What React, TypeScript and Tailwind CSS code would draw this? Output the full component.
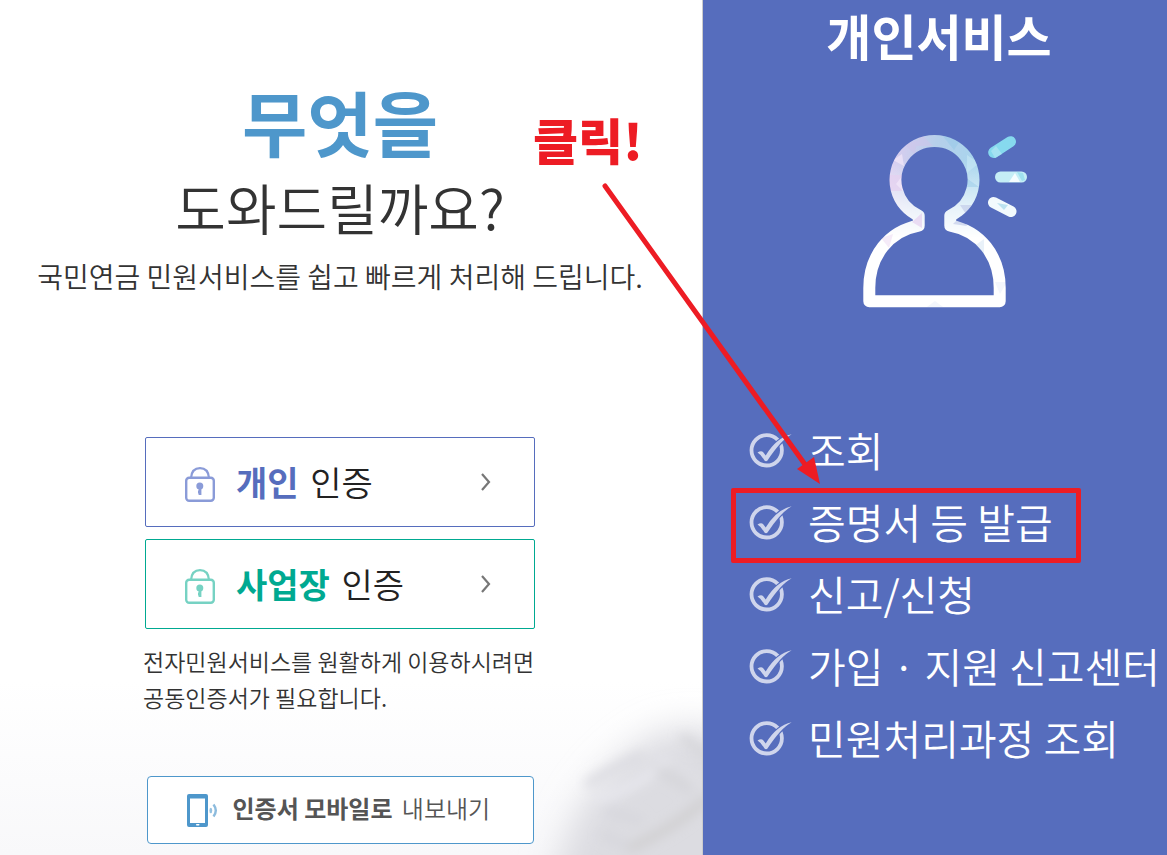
const services = [
  { label: "조회" },
  { label: "증명서 등 발급", marked: true },
  { label: "신고/신청" },
  { label: "가입 · 지원 신고센터" },
  { label: "민원처리과정 조회" },
];

const LockIcon = ({ className }: { className: string }) => (
  <svg
    className={className}
    width="30"
    height="35"
    viewBox="0 0 30 35"
    fill="none"
    stroke="currentColor"
    aria-hidden="true"
  >
    <path d="M6 11C6.500 4.500 10 1.200 15 1.200S23.500 4.500 24 11" strokeWidth="2.200" />
    <rect x="1.200" y="10.800" width="27.600" height="23" rx="3" strokeWidth="2.400" />
    <circle cx="14.800" cy="19" r="3.500" fill="currentColor" stroke="none" />
    <path d="M15 20v8M13 25h1.500" strokeWidth="2.800" />
  </svg>
);

const ChevronIcon = () => (
  <svg
    className="ml-auto text-[#777777]"
    width="12"
    height="18"
    viewBox="0 0 12 18"
    fill="none"
    stroke="currentColor"
    strokeWidth="2.200"
    aria-hidden="true"
  >
    <path d="M2 1l7 8-7 8" />
  </svg>
);

const PhoneIcon = () => (
  <svg
    className="shrink-0 text-[#4e97cb]"
    width="31"
    height="33"
    viewBox="0 0 31 33"
    aria-hidden="true"
  >
    <path
      fill="currentColor"
      fillRule="evenodd"
      d="M2 0h17a2 2 0 0 1 2 2v29a2 2 0 0 1-2 2H2a2 2 0 0 1-2-2V2a2 2 0 0 1 2-2zM3 4.500v24.500h15V4.500z"
    />
    <rect x="9" y="30" width="3.500" height="1.500" rx=".7" fill="#fff" />
    <ellipse cx="23.800" cy="16.500" rx="1.400" ry="2.800" fill="currentColor" opacity=".6" />
    <path
      d="M26.500 10.500q4.600 6 0 12"
      fill="none"
      stroke="currentColor"
      strokeWidth="2.400"
      opacity=".65"
    />
  </svg>
);

const CheckIcon = () => (
  <svg className="shrink-0" width="43" height="36" viewBox="0 0 43 36" aria-hidden="true">
    <circle cx="17.700" cy="18.300" r="15.200" fill="none" stroke="#cfd5ec" strokeWidth="3.800" />
    <path
      d="M8.500 20.500Q12 18.500 14 20L16.700 23.500Q27.500 5.500 42.700 2.300 32 8 18.500 28.500 17 30 15.500 28.500 12 22.500 8.500 20.500z"
      fill="#cfd5ec"
      stroke="#566dbd"
      strokeWidth="2.400"
      paintOrder="stroke"
    />
  </svg>
);

const PersonIcon = () => (
  <svg
    className="mx-auto"
    width="192"
    height="184"
    viewBox="0 0 192 184"
    fill="none"
    aria-hidden="true"
  >
    <defs>
      <linearGradient id="head" x1="50" y1="30" x2="142" y2="50" gradientUnits="userSpaceOnUse">
        <stop offset="0" stopColor="#dccdf0" />
        <stop offset=".45" stopColor="#b6cfea" />
        <stop offset="1" stopColor="#a5d6ee" />
      </linearGradient>
      <linearGradient id="fade" x1="0" y1="30" x2="0" y2="108" gradientUnits="userSpaceOnUse">
        <stop offset="0" stopColor="#fff" stopOpacity="0" />
        <stop offset=".65" stopColor="#fff" stopOpacity=".75" />
        <stop offset="1" stopColor="#fff" />
      </linearGradient>
      <mask id="person" maskUnits="userSpaceOnUse" x="0" y="0" width="192" height="184">
        <path
          d="M79.700 95.600V85.700A39 39 0 1 1 111.300 85.700V95.600C141 101 160.700 126 160.700 158V171.300H30.300V158C30.300 126 50 101 79.700 95.600V85.700"
          stroke="#fff"
          strokeWidth="12"
          strokeLinejoin="round"
        />
      </mask>
    </defs>
    <g mask="url(#person)">
      <rect width="192" height="184" fill="url(#head)" />
      <rect width="192" height="184" fill="url(#fade)" />
      <path d="M50 45h13v16H50zM73 92l10-9v15z" fill="#e6d0f0" opacity=".7" />
      <path d="M57 54l7-9v16zM54 30l9-6 2 12z" fill="#f3e8fa" opacity=".7" />
      <path d="M82 4l12 12H76zM66 15l12-5-2 14z" fill="#cfc3ea" opacity=".5" />
      <path d="M103 5l12 15 8-12zM126 47l14 10h-14z" fill="#8fc6e6" opacity=".4" />
      <path d="M128 25l12 8-12 10z" fill="#c9e9f5" opacity=".6" />
      <path d="M121 75h12l-6 9zM114 94l8-8 6 10z" fill="#c3cdea" opacity=".7" />
      <path d="M42 108l12-4-4 14z" fill="#f3e6f6" opacity=".8" />
      <path d="M134 117l11-8v18z" fill="#e3eef8" opacity=".8" />
      <path d="M156 152h12l-7 12zM88 177l8-6 8 6z" fill="#f3f6fc" />
    </g>
    <g strokeWidth="11" strokeLinecap="round">
      <path d="M154.700 22.500L171.500 11.700" stroke="#86d9ee" />
      <path d="M161.500 47H182.500" stroke="#c5eef6" />
      <path d="M154.500 72.500L172 81.500" stroke="#f2fafd" />
    </g>
    <path d="M152 21l5-5 6 8-7 4z" fill="#b9e8f5" opacity=".6" />
    <path d="M170 52l6-9 5 9z" fill="#f5fdff" />
    <path d="M178 42l6 1 2 7-3 1z" fill="#9fe2ef" />
    <path d="M158 73l11 2-4 5z" fill="#bce3f0" />
  </svg>
);

// soft grey shape fading into the lower right corner of the white panel
const Backdrop = () => (
  <svg
    className="pointer-events-none absolute right-0 bottom-0"
    width="703"
    height="175"
    viewBox="0 0 703 175"
    aria-hidden="true"
  >
    <defs>
      <filter id="wide" x="-30%" y="-30%" width="160%" height="160%">
        <feGaussianBlur stdDeviation="17" />
      </filter>
      <filter id="thin" x="-30%" y="-30%" width="160%" height="160%">
        <feGaussianBlur stdDeviation="6" />
      </filter>
      <linearGradient id="floor" x1="0" y1="0" x2="0" y2="1">
        <stop offset="0" stopColor="#fff" />
        <stop offset="1" stopColor="#f8f8fa" />
      </linearGradient>
    </defs>
    <rect width="703" height="175" fill="url(#floor)" />
    <path
      d="M550 230C560 150 590 100 640 65C675 38 720 45 760 70V230H550z"
      fill="#dcdce1"
      filter="url(#wide)"
    />
    <g fill="none" strokeLinecap="round" filter="url(#thin)">
      <path d="M590 103Q620 85 642 76" stroke="#dadae0" strokeWidth="9" />
      <path d="M610 132L640 140M605 155L625 165" stroke="#d6d6dc" strokeWidth="8" />
      <path d="M600 118Q640 108 665 82" stroke="#e8e8ee" strokeWidth="9" />
      <path d="M632 168Q680 145 706 120" stroke="#cfcecf" strokeWidth="8" />
      <path d="M660 90L690 108M685 58L706 75" stroke="#d4d4d8" strokeWidth="8" />
      <path d="M670 75L703 105" stroke="#e0e0e5" strokeWidth="7" />
    </g>
  </svg>
);

const AuthButton = ({
  name,
  box,
  text,
  icon,
}: {
  name: string;
  box: string;
  text: string;
  icon: string;
}) => (
  <button
    type="button"
    className={`flex h-[90px] w-full cursor-pointer items-center rounded-xs border bg-white pr-[42px] pl-[39px] ${box}`}
  >
    <LockIcon className={`mt-1 shrink-0 ${icon}`} />
    <span className="ml-[21px] text-[34px] leading-[48px] font-[350] whitespace-pre text-[#222222]">
      <strong className={`mr-1 font-bold ${text}`}>{name}</strong> 인증
    </span>
    <ChevronIcon />
  </button>
);

const Intro = () => (
  <section className="relative flex flex-col items-center border-r border-[#cccccc] bg-white pt-20 pr-[22px] pb-[11px]">
    <Backdrop />
    <h1 className="relative text-center font-[350] text-[#333333]">
      <strong className="block text-[71px] leading-[80px] font-bold text-[#4e97cb]">
        무엇을
      </strong>
      <span className="mt-1.5 block text-[55px] leading-[80px]">도와드릴까요?</span>
    </h1>
    <p className="relative mt-2.5 text-[28px] leading-10 font-[350] whitespace-nowrap text-[#333333]">
      국민연금 민원서비스를 쉽고 빠르게 처리해 드립니다.
    </p>
    <div className="relative mt-[141px] flex w-[390px] flex-col gap-3">
      <AuthButton
        name="개인"
        box="border-[#566dbd]"
        text="text-[#566dbd]"
        icon="text-[#8a9bd8]"
      />
      <AuthButton
        name="사업장"
        box="border-[#00a991]"
        text="text-[#00a991]"
        icon="text-[#76d2c3]"
      />
    </div>
    <p className="relative mt-3.5 w-[394px] text-[23px] leading-9 font-[350] whitespace-nowrap text-[#333333]">
      전자민원서비스를 원활하게 이용하시려면
      <br />
      공동인증서가 필요합니다.
    </p>
    <button
      type="button"
      className="relative mt-[61px] flex h-[68px] w-[387px] cursor-pointer items-center rounded-sm border border-[#4e97cb] bg-white pl-[39px] text-[24px] font-[350] whitespace-nowrap text-[#555555]"
    >
      <PhoneIcon />
      <span className="ml-[15px] pb-1">
        <strong className="mr-1 font-bold">인증서 모바일로</strong> 내보내기
      </span>
    </button>
  </section>
);

const PersonalService = () => (
  <section className="bg-[#566dbd] text-white">
    <h2 className="pl-2 text-center text-[49px] leading-[70px] font-bold">개인서비스</h2>
    <div className="mt-[60px]">
      <PersonIcon />
    </div>
    <ul className="mt-[100px] pl-[46px]">
      {services.map((service) => (
        <li key={service.label} className="relative h-18">
          <a
            href="#"
            className="flex h-full items-center gap-4 text-[41px] font-[350] whitespace-nowrap"
          >
            <CheckIcon />
            {service.label}
          </a>
          {service.marked && (
            <span className="pointer-events-none absolute top-0.5 -left-[18px] h-[75px] w-[350px] rounded-xs border-[5px] border-[#ed1c24]" />
          )}
        </li>
      ))}
    </ul>
  </section>
);

const ClickNote = () => (
  <div className="pointer-events-none absolute top-[108px] left-[533px] text-[#ed1c24]">
    <p className="text-[49px] leading-[62px] font-black">클릭!</p>
    <svg
      className="absolute top-[74px] left-[66px]"
      width="226"
      height="306"
      viewBox="0 0 226 306"
      aria-hidden="true"
    >
      <path
        d="M6 4L210 288"
        stroke="currentColor"
        strokeWidth="5"
        strokeLinecap="round"
        fill="none"
      />
      <path d="M221 302L198 287L215 275z" fill="currentColor" />
    </svg>
  </div>
);

const App = () => {
  return (
    <main className="relative grid min-h-screen grid-cols-[703fr_464fr] overflow-hidden font-['Noto_Sans_CJK_KR',sans-serif]">
      <Intro />
      <PersonalService />
      <ClickNote />
    </main>
  );
};

export default App;
